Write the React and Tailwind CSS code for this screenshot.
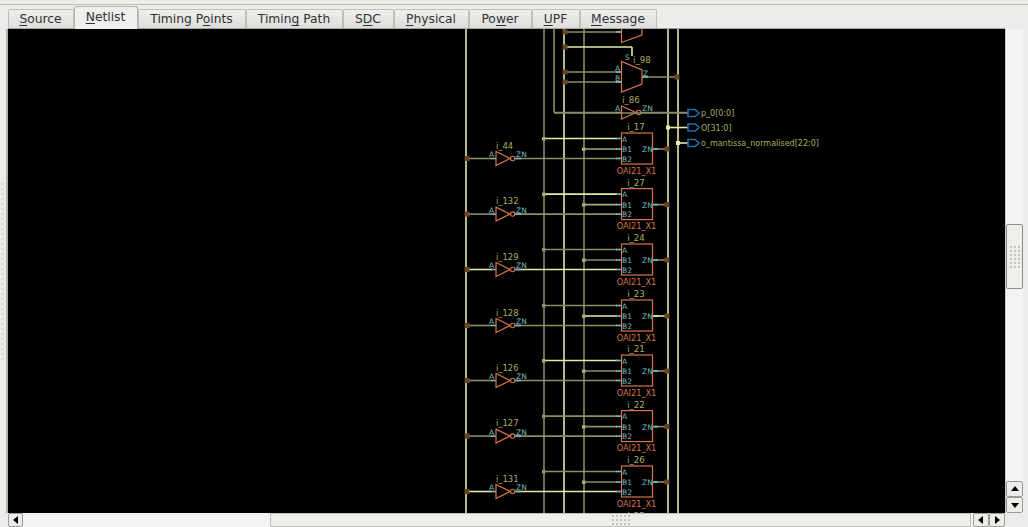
const BRIGHT = "#e6e8a8";
const DIM = "#8c8c66";
const MID = "#a8a87e";
const CYAN = "#76bcbc";
const ORANGE = "#d8754c";
const OLIVE = "#adad60";
const BROWN = "#6b4226";
const FONT = '"DejaVu Sans", sans-serif';

const tabs = [
  { pre: "", u: "S", post: "ource", w: 66 },
  { pre: "", u: "N", post: "etlist", w: 64, active: true },
  { pre: "Timing P", u: "o", post: "ints", w: 108 },
  { pre: "Timin", u: "g", post: " Path", w: 97 },
  { pre: "S", u: "D", post: "C", w: 51 },
  { pre: "", u: "P", post: "hysical", w: 75 },
  { pre: "Po", u: "w", post: "er", w: 63 },
  { pre: "", u: "U", post: "PF", w: 48 },
  { pre: "", u: "M", post: "essage", w: 77 },
];

const rows = [
  { top: 133, inv: "i_44", cell: "i_17", b2: DIM, a: BRIGHT, b1: MID, z: DIM },
  { top: 188.6, inv: "i_132", cell: "i_27", b2: DIM, a: BRIGHT, b1: MID, z: DIM },
  { top: 244, inv: "i_129", cell: "i_24", b2: BRIGHT, a: DIM, b1: DIM, z: DIM },
  { top: 300, inv: "i_128", cell: "i_23", b2: DIM, a: DIM, b1: BRIGHT, z: BRIGHT },
  { top: 355, inv: "i_126", cell: "i_21", b2: DIM, a: BRIGHT, b1: DIM, z: DIM },
  { top: 410.6, inv: "i_127", cell: "i_22", b2: DIM, a: DIM, b1: DIM, z: DIM },
  { top: 466, inv: "i_131", cell: "i_26", b2: BRIGHT, a: DIM, b1: DIM, z: DIM },
];

function Label({ x, y, fill, size = 8, anchor = "start", children }) {
  return (
    <text x={x} y={y} fill={fill} fontSize={size} textAnchor={anchor} fontFamily={FONT}>
      {children}
    </text>
  );
}

function Line({ x1, y1, x2, y2, c = DIM, w = 1.6 }) {
  return <line x1={x1} y1={y1} x2={x2} y2={y2} stroke={c} strokeWidth={w} />;
}

function Dot({ x, y, c = BROWN }) {
  return <rect x={x - 2.5} y={y - 2.5} width="5" height="5" fill={c} />;
}

function Row({ r }) {
  const a = r.top + 5.5;
  const b1 = r.top + 16;
  const b2 = r.top + 25.5;
  return (
    <g>
      <Line x1={466} y1={b2} x2={492} y2={b2} c={r.b2} />
      <Line x1={516} y1={b2} x2={617} y2={b2} c={r.b2} />
      <Line x1={544} y1={a} x2={617} y2={a} c={r.a} />
      <Line x1={584} y1={b1} x2={617} y2={b1} c={r.b1} />
      <Line x1={652} y1={b1} x2={668} y2={b1} c={r.z} />
      <Line x1={491} y1={b2} x2={496} y2={b2} c={CYAN} />
      <Line x1={515} y1={b2} x2={521} y2={b2} c={CYAN} />
      <Line x1={616} y1={a} x2={621} y2={a} c={CYAN} />
      <Line x1={616} y1={b1} x2={621} y2={b1} c={CYAN} />
      <Line x1={616} y1={b2} x2={621} y2={b2} c={CYAN} />
      <Line x1={652} y1={b1} x2={658} y2={b1} c={r.z === BRIGHT ? BRIGHT : CYAN} />
      <Dot x={467} y={b2} />
      <Dot x={667} y={b1} />
      <rect x={542} y={a - 1.5} width="3.5" height="3.5" fill={r.a === BRIGHT ? MID : r.a} />
      <rect x={582} y={b1 - 1.5} width="3.5" height="3.5" fill={MID} />
      <path d={`M496 ${b2 - 7}L510 ${b2}L496 ${b2 + 7}Z`} fill="none" stroke={ORANGE} strokeWidth="1.2" />
      <circle cx={512.7} cy={b2} r="2.2" fill="none" stroke={ORANGE} strokeWidth="1.1" />
      <Label x={489} y={b2 - 1.5} fill={CYAN} size={7.5}>A</Label>
      <Label x={516} y={b2 - 1.5} fill={CYAN} size={7.5}>ZN</Label>
      <Label x={496} y={b2 - 10} fill={OLIVE} size={8.4}>{r.inv}</Label>
      <rect x={621.5} y={r.top} width="31" height="31" fill="#000" stroke={ORANGE} strokeWidth="1.2" />
      <Label x={622} y={a + 3} fill={CYAN} size={7.5}>A</Label>
      <Label x={622} y={b1 + 3} fill={CYAN} size={7.5}>B1</Label>
      <Label x={622} y={b2 + 3} fill={CYAN} size={7.5}>B2</Label>
      <Label x={642} y={b1 + 3} fill={CYAN} size={7.5}>ZN</Label>
      <Label x={636} y={r.top - 3} fill={OLIVE} size={8.6} anchor="middle">{r.cell}</Label>
      <Label x={636.5} y={r.top + 40.5} fill={ORANGE} size={8.2} anchor="middle">OAI21_X1</Label>
    </g>
  );
}

function Port({ y, label, from }) {
  return (
    <g>
      <Line x1={from} y1={y} x2={688} y2={y} c={from === 554 ? DIM : BRIGHT} />
      {from !== 554 && <rect x={from - 2} y={y - 2} width="4" height="4" fill={BRIGHT} />}
      <path d={`M688 ${y - 3.5}H695L699 ${y}L695 ${y + 3.5}H688Z`} fill="none" stroke="#1b6fb0" strokeWidth="1.6" />
      <Label x={701} y={y + 3} fill={OLIVE} size={8}>{label}</Label>
    </g>
  );
}

function Netlist() {
  return (
    <svg className="block w-full h-full" viewBox="8 29 997 484">
      <Line x1={466} y1={29} x2={466} y2={513} c={BRIGHT} />
      <Line x1={544} y1={29} x2={544} y2={513} c={DIM} />
      <Line x1={554} y1={29} x2={554} y2={112.5} c={DIM} />
      <Line x1={564} y1={29} x2={564} y2={513} c={BRIGHT} />
      <Line x1={584} y1={29} x2={584} y2={513} c={DIM} />
      <Line x1={668} y1={29} x2={668} y2={513} c={BRIGHT} />
      <Line x1={678} y1={29} x2={678} y2={513} c={BRIGHT} />

      {/* upper partly hidden mux */}
      <Line x1={564} y1={32} x2={621} y2={32} c={DIM} />
      <Line x1={564} y1={47} x2={632} y2={47} c={BRIGHT} />
      <Line x1={632} y1={47} x2={632} y2={56} c={BRIGHT} />
      <Line x1={616} y1={32} x2={621} y2={32} c={CYAN} />
      <Dot x={565} y={32} />
      <Dot x={565} y={47} />
      <path d="M621.5 29V42.5L642 35V29" fill="none" stroke={ORANGE} strokeWidth="1.2" />

      {/* i_98 mux */}
      <Line x1={564} y1={72} x2={621} y2={72} c={DIM} />
      <Line x1={564} y1={82} x2={621} y2={82} c={DIM} />
      <Line x1={642} y1={77} x2={678} y2={77} c={DIM} />
      <Line x1={616} y1={72} x2={621} y2={72} c={CYAN} />
      <Line x1={616} y1={82} x2={621} y2={82} c={CYAN} />
      <Line x1={642} y1={77} x2={648} y2={77} c={CYAN} />
      <Dot x={565} y={72} />
      <Dot x={565} y={82} />
      <Dot x={677} y={77} />
      <path d="M621.5 61.5V92L642 84V70Z" fill="none" stroke={ORANGE} strokeWidth="1.2" />
      <Label x={625} y={60} fill={CYAN} size={7.5}>S</Label>
      <Label x={615} y={71} fill={CYAN} size={7.5}>A</Label>
      <Label x={615} y={81} fill={CYAN} size={7.5}>B</Label>
      <Label x={643} y={76} fill={CYAN} size={7.5}>Z</Label>
      <Label x={633} y={63} fill={OLIVE} size={8.6}>i_98</Label>

      {/* i_86 */}
      <Line x1={554} y1={112.5} x2={617} y2={112.5} c={DIM} />
      <Line x1={616} y1={112.5} x2={621} y2={112.5} c={CYAN} />
      <path d="M621.5 106L636 112.5L621.5 119Z" fill="none" stroke={ORANGE} strokeWidth="1.2" />
      <circle cx={638.7} cy={112.5} r="2.2" fill="none" stroke={ORANGE} strokeWidth="1.1" />
      <Label x={615} y={111} fill={CYAN} size={7.5}>A</Label>
      <Label x={642} y={111} fill={CYAN} size={7.5}>ZN</Label>
      <Label x={622} y={103} fill={OLIVE} size={8.6}>i_86</Label>

      <Line x1={641} y1={112.5} x2={688} y2={112.5} c={DIM} />
      <Port y={113} label="p_0[0:0]" from={554} />
      <Port y={127.5} label="O[31:0]" from={668} />
      <Port y={143} label="o_mantissa_normalised[22:0]" from={678} />

      {rows.map((r) => (
        <Row key={r.cell} r={r} />
      ))}

      {/* next instance label, cut by the viewport */}
      <Label x={636} y={518.5} fill={OLIVE} size={8.6} anchor="middle">i_25</Label>
    </svg>
  );
}

function Grip({ className = "", cols, rows: n }) {
  return (
    <div
      className={`grid gap-[2px] ${className}`}
      style={{ gridTemplateColumns: `repeat(${cols}, 2px)` }}
    >
      {Array.from({ length: cols * n }).map((_, i) => (
        <div key={i} className="w-[2px] h-[2px] bg-[#c4c3c0]" />
      ))}
    </div>
  );
}

function Arrow({ dir, className = "" }) {
  const d = {
    up: "M1 7L5 2L9 7Z",
    down: "M1 3L5 8L9 3Z",
    left: "M7 1L2 5L7 9Z",
    right: "M3 1L8 5L3 9Z",
  }[dir];
  return (
    <div className={`flex items-center justify-center bg-[#eeedeb] border border-[#9c9a96] rounded-[2px] ${className}`}>
      <svg width="10" height="10" viewBox="0 0 10 10">
        <path d={d} fill="#000" />
      </svg>
    </div>
  );
}

export default function App() {
  return (
    <div
      className="w-[1028px] h-[527px] overflow-hidden flex flex-col bg-[#edecea] text-[#2e3436]"
      style={{ fontFamily: FONT }}
    >
      {/* tab strip */}
      <div className="h-[29px] shrink-0 relative pl-[8px] flex items-end">
        <div className="absolute left-0 right-0 top-[4px] h-px bg-[#bdbbb7]" />
        <div className="absolute left-[8px] right-[23px] bottom-0 h-px bg-[#a8a6a2]" />
        {tabs.map((t) => (
          <div
            key={t.u + t.post}
            style={{ width: t.w }}
            className={
              t.active
                ? "relative z-10 h-[23px] shrink-0 flex items-center justify-center text-[12.3px] leading-none bg-[#f0efed] border border-b-0 border-[#b5b3af] rounded-t-[3px] pb-[2px] pr-[1px]"
                : "h-[20px] shrink-0 flex items-center justify-center text-[12.3px] leading-none bg-[linear-gradient(#f0efed,#dddcd9)] border border-b-0 border-[#c0bebb] rounded-t-[2px] pr-[1px]"
            }
          >
            <span className="whitespace-pre">
              {t.pre}
              <u className="underline underline-offset-2">{t.u}</u>
              {t.post}
            </span>
          </div>
        ))}
      </div>

      {/* canvas row */}
      <div className="flex h-[484px] shrink-0">
        <div className="w-[8px] shrink-0 flex items-center justify-between pl-[1px]">
          <div className="flex flex-col gap-[3px]">
            {Array.from({ length: 36 }).map((_, i) => (
              <div key={i} className="w-[3px] h-[2px] bg-[#dcdbd8]" />
            ))}
          </div>
          <div className="w-[2px] self-stretch bg-[#b0aeaa]" />
        </div>
        <div className="flex-1 bg-black min-w-0">
          <Netlist />
        </div>
        <div className="w-[18px] shrink-0 flex flex-col bg-[#f4f3f1] border-l border-[#c8c6c3]">
          <div className="h-[195px] shrink-0" />
          <div className="h-[65px] shrink-0 flex items-center justify-center bg-[#efeeec] border border-[#8f8d89] rounded-[2px]">
            <Grip cols={3} rows={6} />
          </div>
          <div className="flex-1" />
          <Arrow dir="up" className="h-[16px] shrink-0" />
          <Arrow dir="down" className="h-[16px] shrink-0" />
        </div>
        <div className="w-[5px] shrink-0" />
      </div>

      {/* bottom scrollbar */}
      <div className="flex flex-1 min-h-0 pr-[5px]">
        <div className="w-[8px] shrink-0" />
        <Arrow dir="left" className="w-[15px] shrink-0" />
        <div className="w-[247px] shrink-0 bg-[#f4f3f1]" />
        <div className="flex-1 flex items-center justify-center bg-[#efeeec] border border-[#c0bebb]">
          <Grip cols={5} rows={3} />
        </div>
        <div className="w-[2px] shrink-0 bg-[#f4f3f1]" />
        <Arrow dir="left" className="w-[16px] shrink-0" />
        <Arrow dir="right" className="w-[16px] shrink-0" />
        <div className="w-[18px] shrink-0" />
      </div>
    </div>
  );
}
